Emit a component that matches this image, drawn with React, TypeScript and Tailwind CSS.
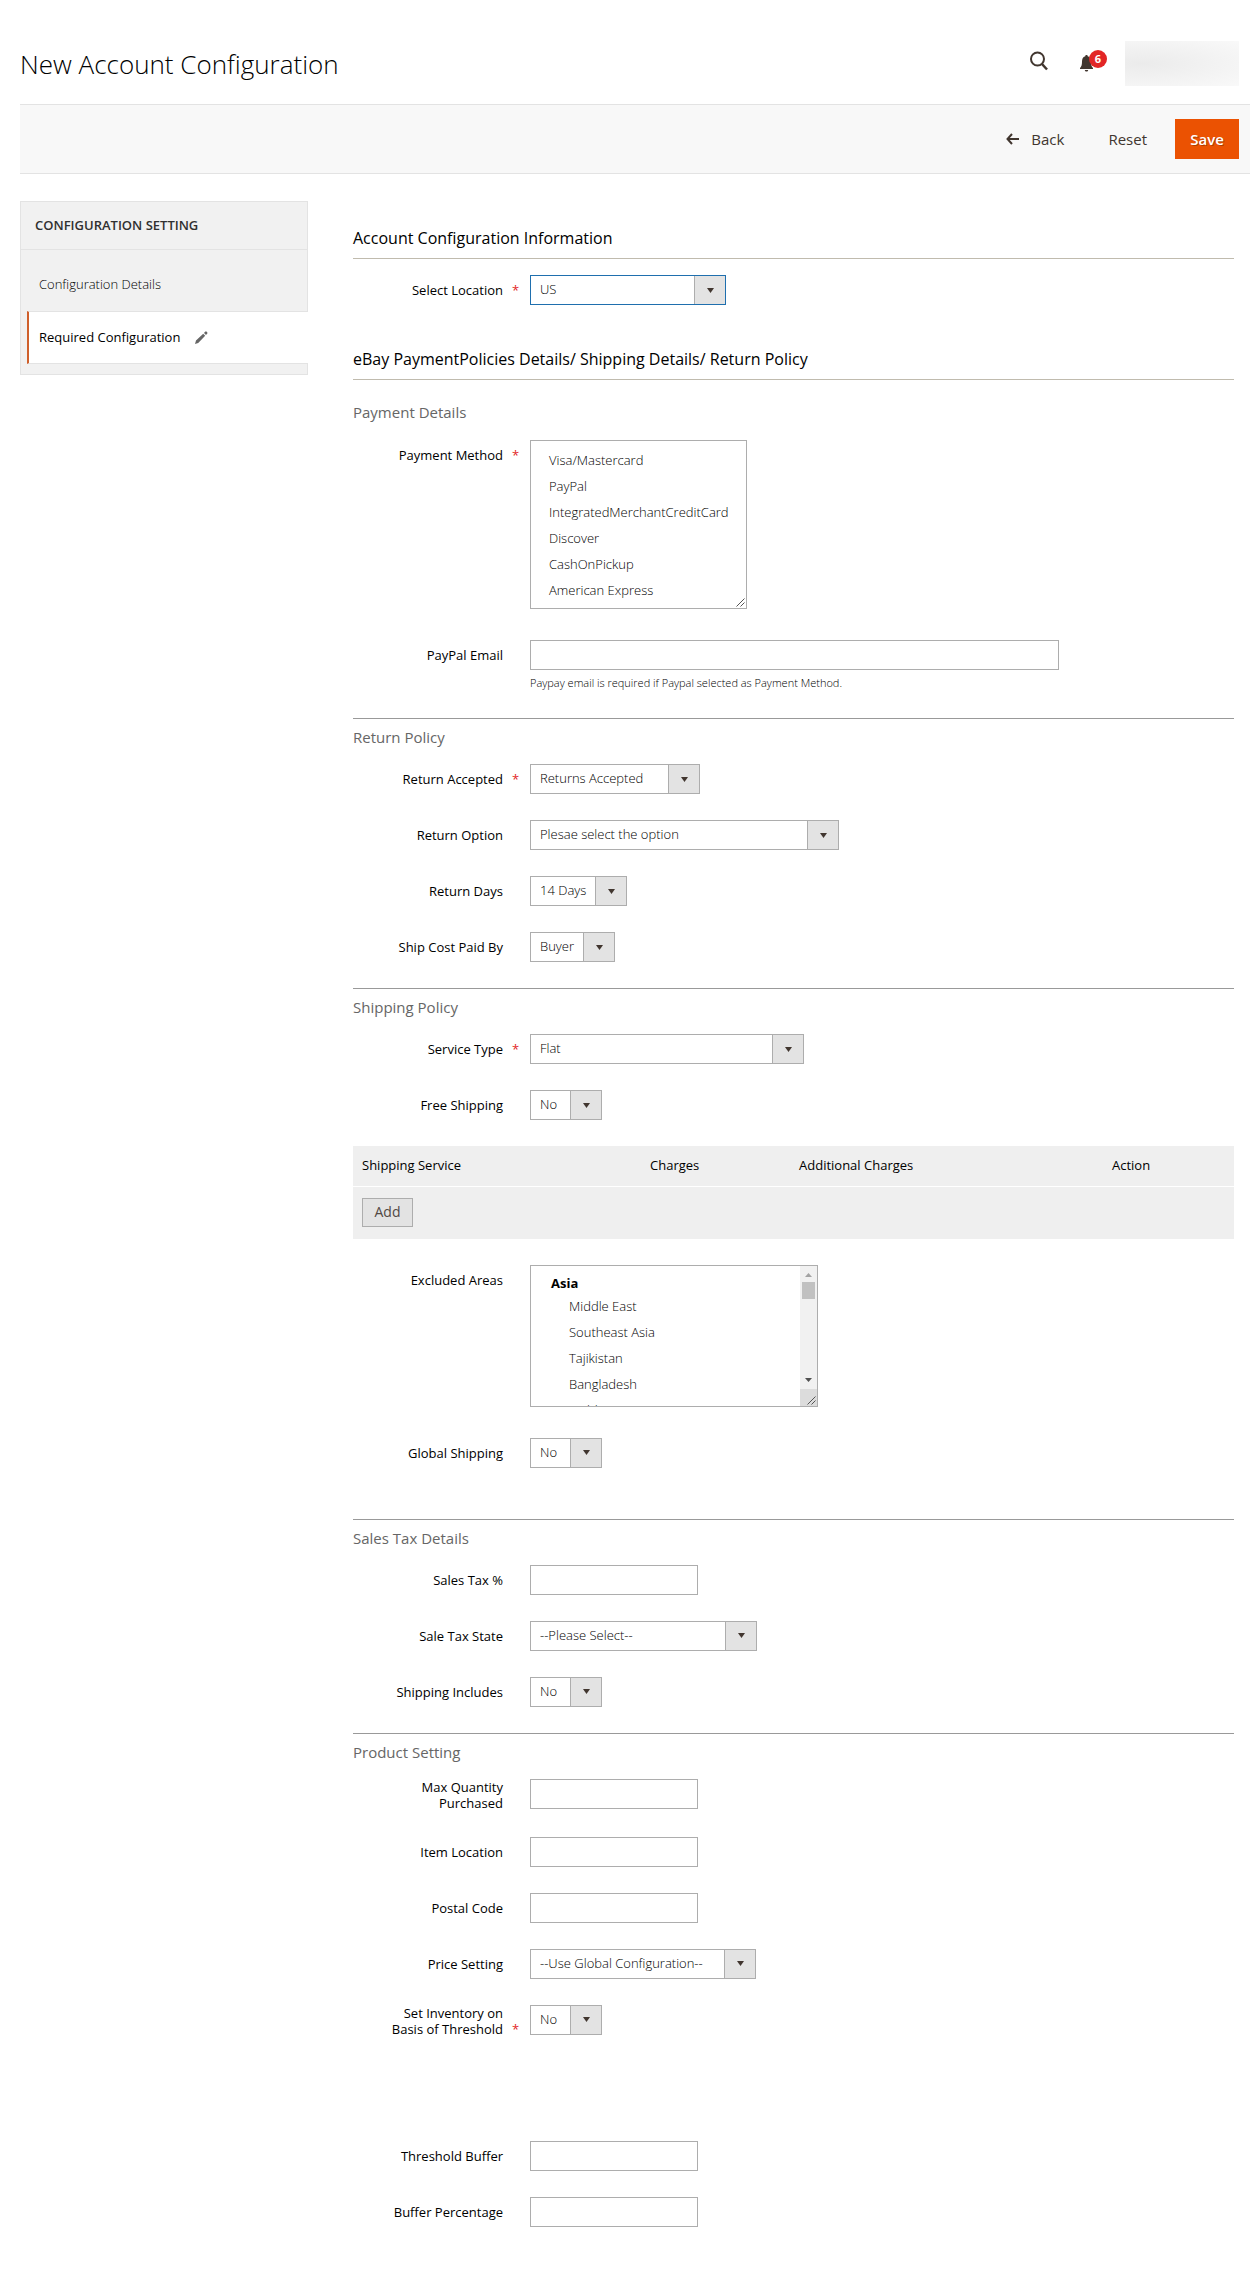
import React, { useState } from 'react';

interface FieldProps {
  id: string;
  label: string;
  required?: boolean;
  children: React.ReactNode;
}

interface SelectBoxProps {
  id: string;
  options: string[];
  className: string;
  active?: boolean;
}

const Field: React.FC<FieldProps> = ({ id, label, required, children }) => (
  <div className="flex items-start mb-[26px]">
    <div className="flex items-center justify-end w-[177px] min-h-[30px] shrink-0">
      <div className="flex items-end text-[13px] leading-4">
        <label htmlFor={id} className="max-w-[124px] text-right font-medium text-black">
          {label}
        </label>
        <span className="w-[25px] mr-0.5 text-center text-[#e22626]" aria-hidden="true">
          {required && '*'}
        </span>
      </div>
    </div>
    <div className="flex-1 min-w-0">{children}</div>
  </div>
);

const SelectBox: React.FC<SelectBoxProps> = ({ id, options, className, active }) => (
  <div className={`relative h-[30px] ${className}`}>
    <select
      id={id}
      className={`w-full h-full appearance-none border bg-white pl-[9px] pr-9 text-[13px] font-light text-black focus:outline-none ${
        active ? 'border-[#1f6fae]' : 'border-[#adadad]'
      }`}
    >
      {options.map((option) => (
        <option key={option}>{option}</option>
      ))}
    </select>
    <span className="pointer-events-none absolute inset-y-px right-px w-[31px] flex items-center justify-center border-l border-[#adadad] bg-[#e3e3e3]">
      <svg width="7" height="5" viewBox="0 0 7 5" fill="#41362f">
        <path d="M0 0h7L3.5 5z" />
      </svg>
    </span>
  </div>
);

const TextBox: React.FC<{ id: string; className?: string; type?: string }> = ({ id, className = 'w-[168px]', type = 'text' }) => (
  <input
    id={id}
    type={type}
    className={`block h-[30px] max-w-full border border-[#adadad] bg-white px-2 text-[13px] text-black focus:outline-none focus:border-[#1f6fae] ${className}`}
  />
);

const ResizeHandle = () => (
  <svg className="pointer-events-none absolute right-0.5 bottom-0.5" width="9" height="9" viewBox="0 0 9 9" stroke="#555" fill="none">
    <path d="M0.5 8.5l8-8M4.5 8.5l4-4" />
  </svg>
);

const Section: React.FC<{ title: string; first?: boolean; children: React.ReactNode }> = ({ title, first, children }) => (
  <section className={first ? 'pt-3' : 'border-t border-[#999]'}>
    <h3 className={`text-[15px] text-[#666] ${first ? 'leading-[40px] mb-2' : 'leading-[36px] mb-[9px]'}`}>{title}</h3>
    {children}
  </section>
);

const PAYMENT_METHODS = ['Visa/Mastercard', 'PayPal', 'IntegratedMerchantCreditCard', 'Discover', 'CashOnPickup', 'American Express'];
const EXCLUDED_AREAS = ['Middle East', 'Southeast Asia', 'Tajikistan', 'Bangladesh', 'Maldives'];
const YES_NO = ['No', 'Yes'];

export default function App() {
  const [tab, setTab] = useState('required');

  return (
    <div className="min-h-screen bg-white pl-5 pb-[60px] font-['Open_Sans','Noto_Sans',sans-serif] text-[#303030]">
      {/* Header */}
      <header className="flex items-start justify-between h-[104px] pt-10 pr-[11px]">
        <h1 className="text-[26px] leading-[48px] font-light text-black">New Account Configuration</h1>
        <div className="flex items-start pt-px">
          <button type="button" aria-label="Search" className="mt-[10px] mr-[31px]">
            <svg width="20" height="20" viewBox="0 0 20 20" fill="none" stroke="#41362f">
              <circle cx="8.5" cy="8" r="6.5" strokeWidth="2" />
              <path d="M13 13l5 5.5" strokeWidth="2.5" />
            </svg>
          </button>
          <button type="button" aria-label="Notifications" className="relative mt-3 mr-[18px] w-[27px] h-5">
            <svg width="13" height="17" viewBox="0 0 13 17" fill="#41362f">
              <path d="M6.5 0c.8 0 1.200.5 1.200 1.200C10.300 1.900 11 4 11 7c0 3 .7 5 2 6v1H0v-1c1.300-1 2-3 2-6 0-3 .7-5.100 3.300-5.800C5.300.5 5.700 0 6.500 0z" />
              <path d="M4.800 15h3.400c-.2 1-.8 1.500-1.700 1.500S5 16 4.800 15z" />
            </svg>
            <span className="absolute -top-[3px] right-0 w-[18px] h-[18px] rounded-full bg-[#e22626] text-white text-[11px] leading-[18px] font-bold text-center">
              6
            </span>
          </button>
          <div className="w-[114px] h-[45px] bg-radial-[at_15%_50%] from-[#ebebeb] via-[#f2f2f2] to-[#f9f9f9]" />
        </div>
      </header>

      {/* Page actions */}
      <div className="flex items-center justify-end h-[70px] border-y border-[#e3e3e3] bg-[#f8f8f8] pr-[11px] text-[15px] font-medium">
        <button type="button" className="flex items-center gap-3 mr-11 text-[#41362f]">
          <svg width="13" height="12" viewBox="0 0 13 12" fill="none" stroke="#41362f" strokeWidth="2">
            <path d="M6 1L1.500 6 6 11M1.500 6H13" />
          </svg>
          Back
        </button>
        <button type="button" className="mr-7 text-[#41362f]">
          Reset
        </button>
        <button type="button" className="w-16 h-10 bg-[#eb5202] text-white font-semibold text-shadow-[1px_1px_0_rgba(0,0,0,0.25)]">
          Save
        </button>
      </div>

      <div className="flex items-start gap-[45px] pt-[27px] pr-4">
        {/* Sidebar */}
        <nav className="w-[288px] shrink-0 border border-[#e3e3e3] bg-[#f1f1f1] pb-[10px]">
          <h2 className="h-12 pl-[14px] border-b border-[#e3e3e3] text-[13px] leading-[46px] font-semibold uppercase">Configuration Setting</h2>
          <ul className="pt-[9px] text-[13px]">
            <li>
              <a href="#details" onClick={() => setTab('details')} className="flex items-center h-[52px] pl-[18px] font-light text-black">
                Configuration Details
              </a>
            </li>
            <li>
              <a
                href="#required"
                onClick={() => setTab('required')}
                aria-current={tab === 'required'}
                className="flex items-center gap-[15px] h-[53px] ml-1.5 -mr-px pl-[10px] border-y border-l-2 border-y-[#e3e3e3] border-l-[#cf5f2b] bg-white font-medium text-black"
              >
                Required Configuration
                <svg width="13" height="13" viewBox="0 0 13 13" fill="#666">
                  <path d="M0 13l1-3.500L8.200 2.800l2 2L3.200 12zM9 2L10.300.6a1 1 0 011.200 0l.8.8a1 1 0 010 1.200L11 4z" />
                </svg>
              </a>
            </li>
          </ul>
        </nav>

        {/* Form */}
        <form className="flex-1 min-w-0" onSubmit={(e) => e.preventDefault()}>
          <h2 className="mt-[18px] mb-4 h-10 border-b border-[#c0bbae] text-base leading-[38px] font-medium text-black">
            Account Configuration Information
          </h2>
          <Field id="location" label="Select Location" required>
            <SelectBox id="location" options={['US']} className="w-[196px]" active />
          </Field>

          <h2 className="mt-[35px] h-10 border-b border-[#c0bbae] text-base leading-[38px] font-medium text-black">
            eBay PaymentPolicies Details/ Shipping Details/ Return Policy
          </h2>

          <Section title="Payment Details" first>
            <Field id="payment" label="Payment Method" required>
              <div className="relative w-[217px] h-[169px] mb-[5px]">
                <select id="payment" multiple className="w-full h-full overflow-hidden border border-[#adadad] bg-white px-[9px] py-[6px] text-[13px] text-black">
                  {PAYMENT_METHODS.map((method) => (
                    <option key={method} className="h-[26px] px-[9px] py-1 leading-[18px] font-light">
                      {method}
                    </option>
                  ))}
                </select>
                <ResizeHandle />
              </div>
            </Field>
            <Field id="paypal-email" label="PayPal Email">
              <TextBox id="paypal-email" type="email" className="w-[529px]" />
              <p className="mt-[3px] text-[11px] leading-[19px] font-light text-black">Paypay email is required if Paypal selected as Payment Method.</p>
            </Field>
          </Section>

          <Section title="Return Policy">
            <Field id="return-accepted" label="Return Accepted" required>
              <SelectBox id="return-accepted" options={['Returns Accepted', 'Returns Not Accepted']} className="w-[170px]" />
            </Field>
            <Field id="return-option" label="Return Option">
              <SelectBox id="return-option" options={['Plesae select the option']} className="w-[309px]" />
            </Field>
            <Field id="return-days" label="Return Days">
              <SelectBox id="return-days" options={['14 Days', '30 Days', '60 Days']} className="w-[97px]" />
            </Field>
            <Field id="ship-cost" label="Ship Cost Paid By">
              <SelectBox id="ship-cost" options={['Buyer', 'Seller']} className="w-[85px]" />
            </Field>
          </Section>

          <Section title="Shipping Policy">
            <Field id="service-type" label="Service Type" required>
              <SelectBox id="service-type" options={['Flat', 'Calculated']} className="w-[274px]" />
            </Field>
            <Field id="free-shipping" label="Free Shipping">
              <SelectBox id="free-shipping" options={YES_NO} className="w-[72px]" />
            </Field>

            <table className="w-full mb-[26px] table-fixed bg-[#efefef] text-left text-[13px]">
              <thead>
                <tr className="h-10 border-b border-white text-black">
                  <th className="w-[288px] pl-[9px] font-medium">Shipping Service</th>
                  <th className="w-[149px] pl-[9px] font-medium">Charges</th>
                  <th className="w-[313px] pl-[9px] font-medium">Additional Charges</th>
                  <th className="pl-[9px] font-medium">Action</th>
                </tr>
              </thead>
              <tbody>
                <tr>
                  <td colSpan={4} className="pl-[9px] pt-[11px] pb-3">
                    <button type="button" className="block w-[51px] h-[29px] border border-[#adadad] bg-[#e3e3e3] text-sm font-medium text-[#514943]">
                      Add
                    </button>
                  </td>
                </tr>
              </tbody>
            </table>

            <Field id="excluded" label="Excluded Areas">
              <div className="relative w-[288px] h-[142px] mb-[5px]">
                <select id="excluded" multiple className="w-full h-full overflow-hidden border border-[#adadad] bg-white px-[9px] py-2 text-[13px] text-black">
                  <optgroup label="Asia" className="px-[9px] font-bold">
                    {EXCLUDED_AREAS.map((area) => (
                      <option key={area} className="h-[26px] py-1 leading-[18px] font-light">
                        {area}
                      </option>
                    ))}
                  </optgroup>
                </select>
                <div className="pointer-events-none absolute inset-y-px right-px w-[17px] flex flex-col items-center justify-between bg-[#f1f1f1]" aria-hidden="true">
                  <div className="flex flex-col items-center gap-[5px] pt-[7px]">
                    <svg width="7" height="4" viewBox="0 0 7 4" fill="#a3a3a3">
                      <path d="M0 4h7L3.500 0z" />
                    </svg>
                    <span className="w-[13px] h-[17px] bg-[#c1c1c1]" />
                  </div>
                  <div className="flex flex-col items-center gap-[7px]">
                    <svg width="7" height="4" viewBox="0 0 7 4" fill="#505050">
                      <path d="M0 0h7L3.500 4z" />
                    </svg>
                    <span className="w-[17px] h-[17px] bg-[#dcdcdc]" />
                  </div>
                </div>
                <ResizeHandle />
              </div>
            </Field>
            <Field id="global-shipping" label="Global Shipping">
              <SelectBox id="global-shipping" options={YES_NO} className="w-[72px] mb-[25px]" />
            </Field>
          </Section>

          <Section title="Sales Tax Details">
            <Field id="sales-tax" label="Sales Tax %">
              <TextBox id="sales-tax" />
            </Field>
            <Field id="tax-state" label="Sale Tax State">
              <SelectBox id="tax-state" options={['--Please Select--']} className="w-[227px]" />
            </Field>
            <Field id="shipping-includes" label="Shipping Includes">
              <SelectBox id="shipping-includes" options={YES_NO} className="w-[72px]" />
            </Field>
          </Section>

          <Section title="Product Setting">
            <Field id="max-quantity" label="Max Quantity Purchased">
              <TextBox id="max-quantity" />
            </Field>
            <Field id="item-location" label="Item Location">
              <TextBox id="item-location" />
            </Field>
            <Field id="postal-code" label="Postal Code">
              <TextBox id="postal-code" />
            </Field>
            <Field id="price-setting" label="Price Setting">
              <SelectBox id="price-setting" options={['--Use Global Configuration--']} className="w-[226px]" />
            </Field>
            <Field id="threshold" label="Set Inventory on Basis of Threshold" required>
              <SelectBox id="threshold" options={YES_NO} className="w-[72px]" />
            </Field>
            <div className="pt-[78px]">
              <Field id="threshold-buffer" label="Threshold Buffer">
                <TextBox id="threshold-buffer" />
              </Field>
              <Field id="buffer-percentage" label="Buffer Percentage">
                <TextBox id="buffer-percentage" />
              </Field>
            </div>
          </Section>
        </form>
      </div>
    </div>
  );
}
